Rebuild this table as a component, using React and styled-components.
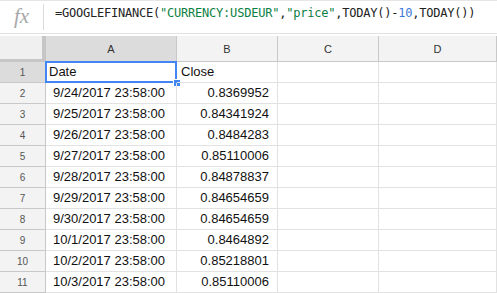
import React from "react";
import styled, { createGlobalStyle } from "styled-components";

const rows = [
  ["Date", "Close"],
  ["9/24/2017 23:58:00", "0.8369952"],
  ["9/25/2017 23:58:00", "0.84341924"],
  ["9/26/2017 23:58:00", "0.8484283"],
  ["9/27/2017 23:58:00", "0.85110006"],
  ["9/28/2017 23:58:00", "0.84878837"],
  ["9/29/2017 23:58:00", "0.84654659"],
  ["9/30/2017 23:58:00", "0.84654659"],
  ["10/1/2017 23:58:00", "0.8464892"],
  ["10/2/2017 23:58:00", "0.85218801"],
  ["10/3/2017 23:58:00", "0.85110006"],
];

const columns = ["A", "B", "C", "D"];

const App = () => {
  return (
    <Page>
      <GlobalStyle />
      <FormulaBar>
        <FxBox>fx</FxBox>
        <Formula>
          =GOOGLEFINANCE(<Str>"CURRENCY:USDEUR"</Str>,<Str>"price"</Str>
          ,TODAY()-<Num>10</Num>,TODAY())
        </Formula>
      </FormulaBar>

      <Grid>
        <Corner />
        {columns.map((c, i) => (
          <ColHeader key={c} selected={i === 0}>
            {c}
          </ColHeader>
        ))}

        {rows.map((r, i) => (
          <React.Fragment key={i}>
            <RowHeader selected={i === 0}>{i + 1}</RowHeader>
            <Cell indent={i === 0 ? 3 : 7}>
              {r[0]}
              {i === 0 && (
                <Selection>
                  <Handle />
                </Selection>
              )}
            </Cell>
            <Cell right={i !== 0} indent={i === 0 ? 4 : 0}>
              {r[1]}
            </Cell>
            <Cell />
            <Cell />
          </React.Fragment>
        ))}
      </Grid>
    </Page>
  );
};

export default App;

const GlobalStyle = createGlobalStyle`
  body {
    margin: 0;
    background: #fff;
    font-family: "Liberation Sans", Arial, sans-serif;
  }
`;

const Page = styled.div`
  width: 497px;
  height: 293px;
  overflow: hidden;
  background: #fff;
`;

const FormulaBar = styled.div`
  display: flex;
  align-items: center;
  height: 34px;
  box-sizing: border-box;
  border-top: 1px solid #e6e6e6;
  border-bottom: 1px solid #e0e0e0;
  margin-bottom: 2px;
`;

const FxBox = styled.div`
  width: 44px;
  height: 26px;
  box-sizing: border-box;
  border-right: 1px solid #dadada;
  display: flex;
  align-items: center;
  justify-content: center;
  font-family: "Liberation Serif", "Times New Roman", serif;
  font-style: italic;
  font-size: 21px;
  color: #a8a8a8;
  padding-bottom: 2px;
`;

const Formula = styled.div`
  padding-left: 11px;
  margin-top: -8px;
  font-family: "DejaVu Sans Mono", "Liberation Mono", monospace;
  font-size: 12px;
  letter-spacing: -0.22px;
  color: #222;
  white-space: nowrap;
`;

const Str = styled.span`
  color: #0b8043;
`;

const Num = styled.span`
  color: #3d78d8;
`;

const Grid = styled.div`
  display: grid;
  grid-template-columns: 46px 131px 101px 101px 118px;
  grid-template-rows: 26px repeat(11, 21px);
`;

const Corner = styled.div`
  background: #f0f0f0;
  border-right: 4px solid #c6c6c6;
  border-bottom: 3px solid #c6c6c6;
  box-sizing: border-box;
`;

const ColHeader = styled.div`
  background: ${(p) => (p.selected ? "#dcdcdc" : "#f3f3f3")};
  border-right: 1px solid #c8c8c8;
  border-bottom: 1px solid #c8c8c8;
  box-sizing: border-box;
  display: flex;
  align-items: center;
  justify-content: center;
  font-size: 11px;
  color: #333;
  padding-top: 1px;
`;

const RowHeader = styled.div`
  background: ${(p) => (p.selected ? "#dcdcdc" : "#f3f3f3")};
  border-right: 1px solid #c8c8c8;
  border-bottom: 1px solid #c8c8c8;
  box-sizing: border-box;
  display: flex;
  align-items: center;
  justify-content: center;
  font-size: 10px;
  color: #555;
`;

const Cell = styled.div`
  position: relative;
  border-right: 1px solid #e2e2e2;
  border-bottom: 1px solid #e2e2e2;
  box-sizing: border-box;
  font-size: 13px;
  line-height: 20px;
  color: #111;
  white-space: nowrap;
  text-align: ${(p) => (p.right ? "right" : "left")};
  padding-left: ${(p) => p.indent || 0}px;
  padding-right: ${(p) => (p.right ? 8 : 0)}px;
`;

const Selection = styled.div`
  position: absolute;
  left: -1px;
  top: -1px;
  right: -1px;
  bottom: -1px;
  border: 2px solid #4285f4;
  pointer-events: none;
`;

const Handle = styled.div`
  position: absolute;
  right: -6px;
  bottom: -6px;
  width: 6px;
  height: 6px;
  background: #4285f4;
  border: 1px solid #fff;
`;
